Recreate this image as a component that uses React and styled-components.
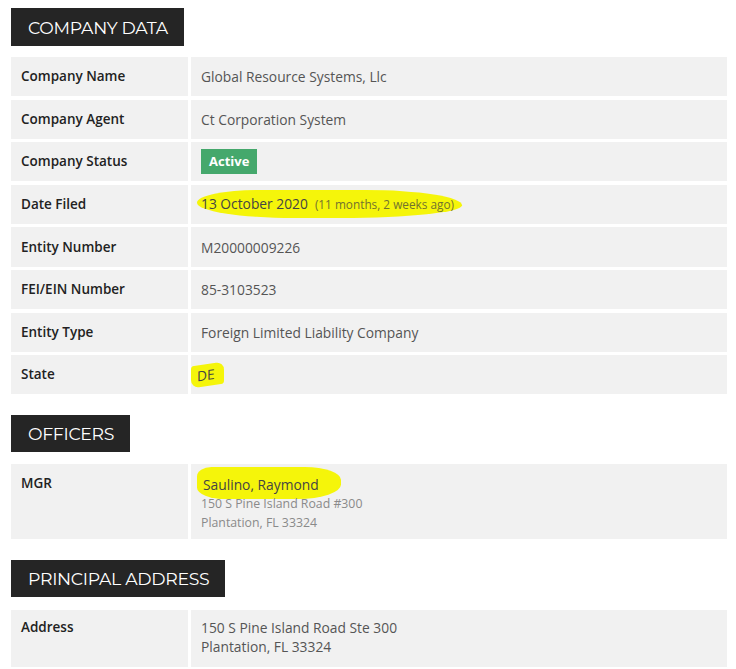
import styled, { createGlobalStyle } from "styled-components";

const GlobalStyle = createGlobalStyle`
  html, body {
    margin: 0;
    padding: 0;
    background: #ffffff;
  }
  body {
    font-family: "Open Sans", "Liberation Sans", sans-serif;
    -webkit-font-smoothing: antialiased;
  }
`;

const Page = styled.div`
  width: 716px;
  padding: 8px 9px 0 11px;
  display: flex;
  flex-direction: column;
`;

const Section = styled.section`
  display: flex;
  flex-direction: column;
  align-items: flex-start;
  margin-bottom: 21px;
`;

const Title = styled.h2`
  margin: 0 0 ${(p) => p.$gap || 12}px;
  height: ${(p) => p.$h || 37}px;
  padding: 0 16px 0 17px;
  display: flex;
  align-items: center;
  background: #252525;
  color: #ffffff;
  font-family: "Montserrat", "Lato", "Liberation Sans", sans-serif;
  font-weight: 400;
  font-size: 17.3px;
  letter-spacing: -0.3px;
`;

const Table = styled.div`
  width: 100%;
  display: grid;
  grid-template-columns: 177px 1fr;
  gap: 3.3px 3px;
`;

const Label = styled.div`
  background: #f1f1f1;
  min-height: ${(p) => p.$h || 39}px;
  box-sizing: border-box;
  padding: ${(p) => (p.$top ? `${p.$top}px 10px 0` : "0 10px")};
  display: flex;
  align-items: ${(p) => (p.$top ? "flex-start" : "center")};
  color: #222222;
  font-size: 13.5px;
  font-weight: 600;
  line-height: 19px;
`;

const Value = styled.div`
  background: #f1f1f1;
  min-height: ${(p) => p.$h || 39}px;
  box-sizing: border-box;
  padding: ${(p) => (p.$top ? `${p.$top}px 10px 0` : "0 10px")};
  display: flex;
  flex-direction: column;
  justify-content: ${(p) => (p.$top ? "flex-start" : "center")};
  align-items: flex-start;
  color: #555555;
  font-size: 13.8px;
  line-height: 19px;
`;

const Badge = styled.span`
  display: inline-block;
  background: #45a86c;
  color: #ffffff;
  font-weight: 700;
  font-size: 13px;
  padding: 3px 8px 3px;
  line-height: 19px;
`;

const Marker = styled.span`
  display: inline-block;
  background: #f5f50a;
  color: #444;
  padding: ${(p) => p.$pad || "3px 6px"};
  margin: ${(p) => p.$margin || "0 0 0 -4px"};
  border-radius: ${(p) => p.$radius || "40% 30% 45% 35% / 60% 50% 55% 45%"};
  transform: ${(p) => p.$tilt || "none"};
`;

const Ago = styled.span`
  margin-left: 7px;
  font-size: 11.8px;
  color: #72722e;
`;

const SubLine = styled.span`
  font-size: 12.3px;
  color: #8a8a8a;
  line-height: 19px;
`;

const Tail = styled.div`
  background: #f1f1f1;
  height: 6px;
  margin-top: 3px;
  grid-column: ${(p) => p.$col};
`;

const companyRows = [
  ["Company Name", "Global Resource Systems, Llc"],
  ["Company Agent", "Ct Corporation System"],
  ["Company Status", "badge"],
  ["Date Filed", "date"],
  ["Entity Number", "M20000009226"],
  ["FEI/EIN Number", "85-3103523"],
  ["Entity Type", "Foreign Limited Liability Company"],
  ["State", "state"],
];

const renderValue = (v) => {
  if (v === "badge") return <Badge>Active</Badge>;
  if (v === "date")
    return (
      <Marker $pad="4px 8px 4px 4px" $radius="25% 40% 50% 40% / 50% 60% 50% 60%">
        13 October 2020<Ago>(11 months, 2 weeks ago)</Ago>
      </Marker>
    );
  if (v === "state")
    return (
      <Marker
        $pad="1px 9px 2px 6px"
        $margin="0 0 0 -10px"
        $radius="3px 8px 3px 8px"
        $tilt="skewY(-8deg)"
      >
        DE
      </Marker>
    );
  return v;
};

export default function App() {
  return (
    <>
      <GlobalStyle />
      <Page>
        <Section>
          <Title $h={38} $gap={11}>COMPANY DATA</Title>
          <Table>
            {companyRows.map(([label, value]) => (
              <>
                <Label key={label + "l"} $h={39.3}>{label}</Label>
                <Value key={label + "v"} $h={39.3}>{renderValue(value)}</Value>
              </>
            ))}
          </Table>
        </Section>

        <Section>
          <Title>OFFICERS</Title>
          <Table>
            <Label $h={75} $top={10}>MGR</Label>
            <Value $h={75} $top={10}>
              <Marker
                $pad="8px 22px 5px 6px"
                $margin="-7px 0 -5px -4px"
                $radius="10% 25% 30% 20% / 30% 40% 45% 35%"
              >
                Saulino, Raymond
              </Marker>
              <SubLine>150 S Pine Island Road #300</SubLine>
              <SubLine>Plantation, FL 33324</SubLine>
            </Value>
          </Table>
        </Section>

        <Section>
          <Title $gap={13}>PRINCIPAL ADDRESS</Title>
          <Table>
            <Label $h={57} $top={8}>Address</Label>
            <Value $h={57} $top={8}>
              <span>150 S Pine Island Road Ste 300</span>
              <span>Plantation, FL 33324</span>
            </Value>
            <Tail $col="1" />
            <Tail $col="2" />
          </Table>
        </Section>
      </Page>
    </>
  );
}
